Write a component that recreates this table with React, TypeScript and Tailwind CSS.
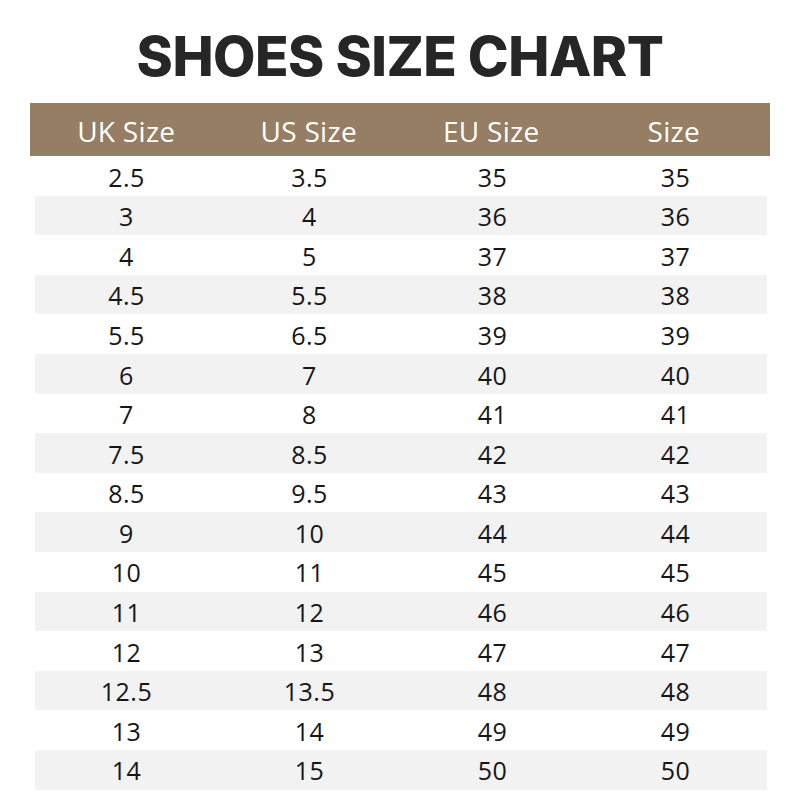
import React from "react";

const rows: [string, string, string, string][] = [
  ["2.5", "3.5", "35", "35"],
  ["3", "4", "36", "36"],
  ["4", "5", "37", "37"],
  ["4.5", "5.5", "38", "38"],
  ["5.5", "6.5", "39", "39"],
  ["6", "7", "40", "40"],
  ["7", "8", "41", "41"],
  ["7.5", "8.5", "42", "42"],
  ["8.5", "9.5", "43", "43"],
  ["9", "10", "44", "44"],
  ["10", "11", "45", "45"],
  ["11", "12", "46", "46"],
  ["12", "13", "47", "47"],
  ["12.5", "13.5", "48", "48"],
  ["13", "14", "49", "49"],
  ["14", "15", "50", "50"],
];

const headers = ["UK Size", "US Size", "EU Size", "Size"];

export default function App() {
  return (
    <div className="w-[800px] h-[800px] bg-white overflow-hidden flex flex-col">
      <div className="h-[103px] flex items-center justify-center pt-[10px]">
        <h1
          className="text-[55px] font-extrabold text-[#262626] leading-none tracking-[-0.5px]"
          style={{ fontFamily: "Inter, 'Noto Sans', sans-serif" }}
        >
          SHOES SIZE CHART
        </h1>
      </div>
      <div className="mx-[30px] w-[740px] h-[53px] bg-[#957e63] flex px-[5px]">
        {headers.map((h) => (
          <div
            key={h}
            className="flex-1 flex items-center justify-center text-white text-[28px] tracking-[0.3px] pt-[2px]"
            style={{ fontFamily: "'Open Sans', 'Noto Sans', sans-serif" }}
          >
            {h}
          </div>
        ))}
      </div>
      <div className="ml-[35px] w-[732px] flex flex-col">
        {rows.map((r, i) => (
          <div
            key={i}
            className={`flex h-[39.6px] ${i % 2 === 1 ? "bg-[#f2f2f2]" : "bg-white"}`}
          >
            {r.map((c, j) => (
              <div
                key={j}
                className="flex-1 flex items-center justify-center text-[25px] tracking-[0.5px] text-[#161616] pt-[3px]"
                style={{ fontFamily: "'Open Sans', 'Noto Sans', sans-serif" }}
              >
                {c}
              </div>
            ))}
          </div>
        ))}
      </div>
    </div>
  );
}
